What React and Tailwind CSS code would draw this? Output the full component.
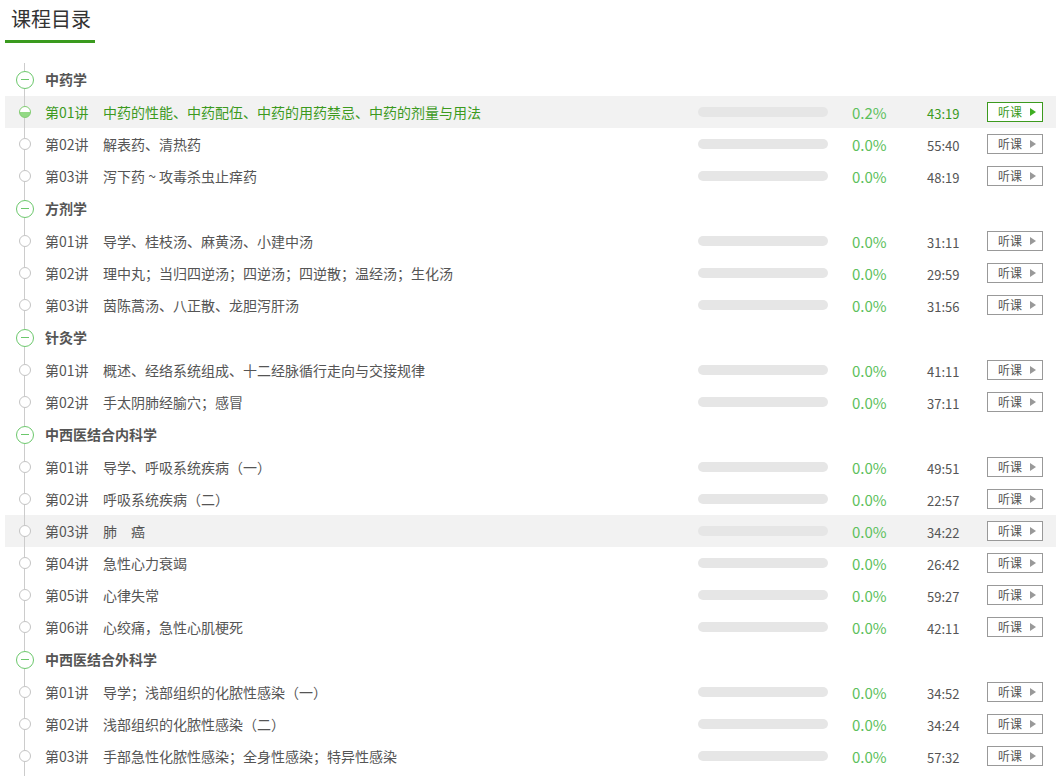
import { useState } from "react";

const FONT = { fontFamily: '"Noto Sans CJK SC", "Noto Sans", "Liberation Sans", sans-serif' };

const chapters = [
  {
    name: "中药学",
    lessons: [
      { no: "第01讲", title: "中药的性能、中药配伍、中药的用药禁忌、中药的剂量与用法", pct: "0.2%", time: "43:19", active: true },
      { no: "第02讲", title: "解表药、清热药", pct: "0.0%", time: "55:40" },
      { no: "第03讲", title: "泻下药 ~ 攻毒杀虫止痒药", pct: "0.0%", time: "48:19" },
    ],
  },
  {
    name: "方剂学",
    lessons: [
      { no: "第01讲", title: "导学、桂枝汤、麻黄汤、小建中汤", pct: "0.0%", time: "31:11" },
      { no: "第02讲", title: "理中丸；当归四逆汤；四逆汤；四逆散；温经汤；生化汤", pct: "0.0%", time: "29:59" },
      { no: "第03讲", title: "茵陈蒿汤、八正散、龙胆泻肝汤", pct: "0.0%", time: "31:56" },
    ],
  },
  {
    name: "针灸学",
    lessons: [
      { no: "第01讲", title: "概述、经络系统组成、十二经脉循行走向与交接规律", pct: "0.0%", time: "41:11" },
      { no: "第02讲", title: "手太阴肺经腧穴；感冒", pct: "0.0%", time: "37:11" },
    ],
  },
  {
    name: "中西医结合内科学",
    lessons: [
      { no: "第01讲", title: "导学、呼吸系统疾病（一）", pct: "0.0%", time: "49:51" },
      { no: "第02讲", title: "呼吸系统疾病（二）", pct: "0.0%", time: "22:57" },
      { no: "第03讲", title: "肺　癌", pct: "0.0%", time: "34:22", hover: true },
      { no: "第04讲", title: "急性心力衰竭", pct: "0.0%", time: "26:42" },
      { no: "第05讲", title: "心律失常", pct: "0.0%", time: "59:27" },
      { no: "第06讲", title: "心绞痛，急性心肌梗死", pct: "0.0%", time: "42:11" },
    ],
  },
  {
    name: "中西医结合外科学",
    lessons: [
      { no: "第01讲", title: "导学；浅部组织的化脓性感染（一）", pct: "0.0%", time: "34:52" },
      { no: "第02讲", title: "浅部组织的化脓性感染（二）", pct: "0.0%", time: "34:24" },
      { no: "第03讲", title: "手部急性化脓性感染；全身性感染；特异性感染", pct: "0.0%", time: "57:32" },
    ],
  },
];

// timeline cell: line above, marker, line below
const Rail = ({ children }) => (
  <div className="flex h-full w-[39px] shrink-0 flex-col items-center">
    <div className="w-px flex-1 bg-[#cccccc]" />
    {children}
    <div className="w-px flex-1 bg-[#cccccc]" />
  </div>
);

const ChapterRow = ({ name }) => (
  <div className="flex h-[33px] items-center">
    <Rail>
      <div className="flex h-[18px] w-[18px] items-center justify-center rounded-full border-[1.5px] border-[#6cc86c] bg-white">
        <div className="h-[1.5px] w-[8px] bg-[#6cc86c]" />
      </div>
    </Rail>
    <div className="pl-px text-[14px] font-bold text-[#555555]">{name}</div>
  </div>
);

const LessonRow = ({ lesson }) => {
  const [hover, setHover] = useState(false);
  const { active } = lesson;
  const shaded = active || lesson.hover || hover;
  return (
    <div
      onMouseEnter={() => setHover(true)}
      onMouseLeave={() => setHover(false)}
      className={`flex h-[32px] items-center ${shaded ? "bg-[#f2f2f2]" : ""}`}
    >
      <Rail>
        <div
          className={`h-[12px] w-[12px] rounded-full border ${
            active
              ? "border-[#80cc70] bg-[linear-gradient(to_bottom,#ffffff_50%,#93d985_50%)]"
              : "border-[#c4c4c4] bg-white"
          }`}
        />
      </Rail>
      <div
        className={`flex min-w-0 flex-1 items-center pl-px text-[14px] ${
          active ? "text-[#3c9a1e]" : "text-[#555555]"
        }`}
      >
        <span className="w-[58px] shrink-0">{lesson.no}</span>
        <span className="truncate">{lesson.title}</span>
      </div>
      <div className="h-[10px] w-[130px] shrink-0 rounded-full bg-[#e6e6e6]" />
      <div className="w-[99px] shrink-0 pl-[24px] pt-[3px] text-[15px] text-[#5cc05c]">{lesson.pct}</div>
      <div className={`w-[60px] shrink-0 pt-[3px] text-[13px] ${active ? "text-[#3c9a1e]" : "text-[#555555]"}`}>
        {lesson.time}
      </div>
      <button
        className={`mr-[13px] flex h-[20px] w-[56px] shrink-0 items-center border bg-white pl-[10px] text-[12px] ${
          active ? "border-[#3c9a1e] text-[#3c9a1e]" : "border-[#999999] text-[#555555]"
        }`}
      >
        <span>听课</span>
        <svg width="6" height="8" viewBox="0 0 6 8" className="ml-[8px]">
          <path d="M0 0 L6 4 L0 8 Z" fill={active ? "#3fae22" : "#999999"} />
        </svg>
      </button>
    </div>
  );
};

export default function App() {
  return (
    <div className="min-h-screen bg-white pl-[5px]" style={FONT}>
      <div className="inline-block w-[90px] border-b-[3px] border-[#3a9a1e] pl-[6px]">
        <div className="h-[40px] text-[20px] leading-[37px] text-[#333333]">课程目录</div>
      </div>
      <div className="mt-[20px]">
        {chapters.map((ch) => (
          <div key={ch.name}>
            <ChapterRow name={ch.name} />
            {ch.lessons.map((l) => (
              <LessonRow key={ch.name + l.no} lesson={l} />
            ))}
          </div>
        ))}
        <div className="flex h-[20px]">
          <Rail />
        </div>
      </div>
    </div>
  );
}
